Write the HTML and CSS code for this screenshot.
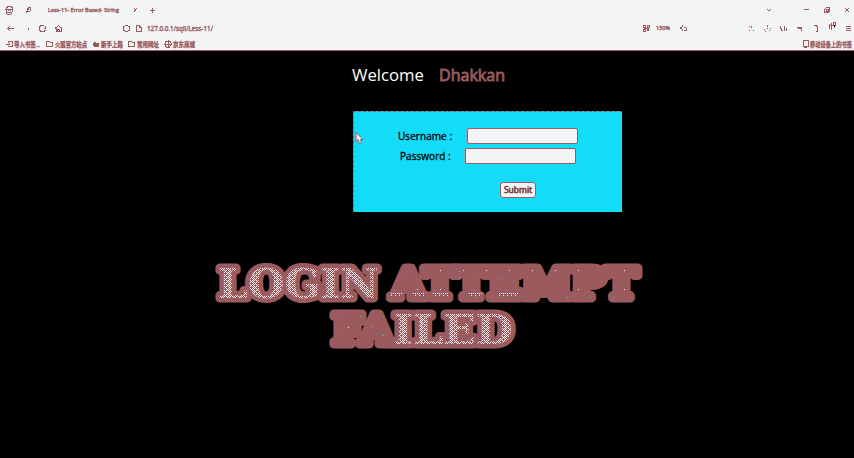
FILE: index.html
```
<!DOCTYPE html>
<html lang="zh-CN">
<head>
<meta charset="utf-8">
<title>Less-11- Error Based- String</title>
<link rel="stylesheet" href="styles.css">
</head>
<body>
<header class="chrome">
  <div class="row tabs">
    <svg class="icon" viewBox="0 0 10 10"><path d="M2 2h1V1h4v1h1v5L7 9H3L2 7zM1 4h8M4 4v2M6 4v2M3 7h4"/></svg>
    <svg class="icon g9" viewBox="0 0 10 10"><path d="M7 2L4 4v3l3-1V2M6 4L3 8M3 6h4"/></svg>
    <svg class="tab-title" width="72" height="14"><text x="0" y="9" textLength="71" lengthAdjust="spacingAndGlyphs">Less-11- Error Based- String</text></svg>
    <svg class="icon g10" viewBox="0 0 10 10"><path d="M4 3l2 2M7 3L4 7"/></svg>
    <svg class="icon g7" viewBox="0 0 10 10"><path d="M5 2.500v5M2.500 5.500h5"/></svg>
    <svg class="icon push" viewBox="0 0 10 10"><path d="M3 4l2 2 2-2"/></svg>
    <svg class="icon g27" viewBox="0 0 10 10"><path d="M2.500 4.500h5"/></svg>
    <svg class="icon g11" viewBox="0 0 10 10"><path d="M4 3l2-1 1.500 1v3L6 7.500H3L2.500 5zM4 4.500h2v2H4z"/></svg>
    <svg class="icon g10" viewBox="0 0 10 10"><path d="M3 3l4 4M7 3L3 7"/></svg>
  </div>
  <div class="row nav">
    <svg class="icon" viewBox="0 0 10 10"><path d="M3 5.500h7M6 3L3.500 5.500 6 8"/></svg>
    <svg class="icon g9" viewBox="0 0 10 10"><path d="M5.500 5v2"/></svg>
    <svg class="icon g4" viewBox="0 0 10 10"><path d="M7.500 3.500L6 2.500H4L2.500 4v3L4 8.500h3L8.500 7M8.500 3v2H6.500"/></svg>
    <svg class="icon g6" viewBox="0 0 10 10"><path d="M2 5.500L5.500 2.500 9 5.500M3 5v3.500h5V5M4.500 8V6h2v2"/></svg>
    <svg class="icon g58" viewBox="0 0 10 10"><path d="M2.500 4l2-1.500h2L8.500 4v3L6.500 8.500h-2L2.500 7z"/></svg>
    <svg class="icon g3" viewBox="0 0 10 10"><path d="M2.500 2.500H5L7.500 4.500v4h-5zM5.500 2.500v2H8"/></svg>
    <svg class="url" width="67" height="14"><text x="0" y="10" textLength="66" lengthAdjust="spacingAndGlyphs">127.0.0.1/sqli/Less-11/</text></svg>
    <svg class="icon push" viewBox="0 0 10 10"><path d="M3.500 2.500h2v2h-2zM7.500 2.500h2v2h-2zM3.500 6.500h2v2h-2zM7 6l2 2M9 6L7 8M4 5.500h5"/></svg>
    <svg class="zoom" width="15" height="14"><text x="0" y="9" textLength="14" lengthAdjust="spacingAndGlyphs">150%</text></svg>
    <svg class="icon g7" viewBox="0 0 10 10"><path d="M5 2L4 4 2 5l2 1v2M6 4l2 1v2H6v1"/></svg>
    <svg class="icon g58" viewBox="0 0 10 10"><path d="M5.500 3v2M3 3v1M3 7v1M7 7v1"/></svg>
    <svg class="icon g6" viewBox="0 0 10 10"><path d="M5.500 2v1.500M2.500 6v1M5 5v1M8 5v1M7 7v1M3 8h1"/></svg>
    <svg class="icon g6" viewBox="0 0 10 10"><path d="M2.500 3v2l1 1v2M6.500 3v5M4 7.500h1M8.500 5v3"/></svg>
    <svg class="icon g6" viewBox="0 0 10 10"><path d="M2.500 4.500h5v3M4 5.500h4"/></svg>
    <svg class="icon g7" viewBox="0 0 10 10"><path d="M3 2.500h2l1 1v5H4.500"/></svg>
    <svg class="icon g6 high" viewBox="0 0 10 10"><path d="M2.500 3v5M4.500 2v7M2 4h4V1h2.500v3H6M7 4v3"/><path class="ink" d="M7.500 3.500v2"/></svg>
    <svg class="icon g6" viewBox="0 0 10 10"><path d="M2.500 3.500h5M2.500 5.500h5M2.500 7.500h5"/></svg>
  </div>
  <div class="row marks">
    <svg class="icon" viewBox="0 0 10 10"><path d="M4 2.500h4v5H4M2 5h4M4.500 3.500L6 5 4.500 6.500"/></svg>
    <svg class="mark" width="27" height="14"><text x="0" y="9.500" textLength="26" lengthAdjust="spacingAndGlyphs">导入书签...</text></svg>
    <svg class="icon g4" viewBox="0 0 10 10"><path d="M1.500 2.500h3l1 1h2v4h-6z"/></svg>
    <svg class="mark" width="33" height="14"><text x="0" y="9.500" textLength="32" lengthAdjust="spacingAndGlyphs">火狐官方站点</text></svg>
    <svg class="icon g3" viewBox="0 0 10 10"><path class="solid" d="M3 4l1-1 1 1h2v3H3L2 6z"/></svg>
    <svg class="mark" width="23" height="14"><text x="0" y="9.500" textLength="22" lengthAdjust="spacingAndGlyphs">新手上路</text></svg>
    <svg class="icon g3" viewBox="0 0 10 10"><path d="M1.500 2.500h3l1 1h2v4h-6z"/></svg>
    <svg class="mark" width="23" height="14"><text x="0" y="9.500" textLength="22" lengthAdjust="spacingAndGlyphs">常用网址</text></svg>
    <svg class="icon g3" viewBox="0 0 10 10"><path d="M3.500 2h3L8 4v2L6.500 8h-3L2 6V4zM5 1v8M1 5h8"/></svg>
    <svg class="mark" width="23" height="14"><text x="0" y="9.500" textLength="22" lengthAdjust="spacingAndGlyphs">京东商城</text></svg>
    <svg class="icon push" viewBox="0 0 10 10"><path d="M3 1.500h5v6H3zM4 8.500h3"/></svg>
    <svg class="mark" width="43" height="14"><text x="0" y="9.500" textLength="42" lengthAdjust="spacingAndGlyphs">移动设备上的书签</text></svg>
  </div>
</header>
<main>
  <h1 class="welcome">
    <svg width="160" height="26"><text class="hello" x="0" y="20" textLength="72" lengthAdjust="spacingAndGlyphs">Welcome</text><text class="name" x="87" y="20" textLength="66" lengthAdjust="spacingAndGlyphs">Dhakkan</text></svg>
  </h1>
  <form class="login">
    <div class="field"><label for="user">Username :</label><input id="user" type="text"></div>
    <div class="field second"><label for="pass">Password :</label><input id="pass" type="password"></div>
    <button type="button">Submit</button>
    <svg class="cursor" width="9" height="13" viewBox="0 0 9 13"><path d="M1 .5v9l2-2 1.500 4 2-1L5.500 7.500h2.500z"/></svg>
  </form>
  <svg class="result" width="854" height="100" viewBox="0 255 854 100">
    <defs>
      <pattern id="dots" width="6" height="4" patternUnits="userSpaceOnUse"><rect class="rose" width="6" height="4"/><path class="white" d="M0 0h1v1h-1zM2 0h1v1h-1zM4 0h1v1h-1zM1 1h1v1h-1zM5 1h1v1h-1zM0 2h1v1h-1zM2 2h1v1h-1zM4 2h1v1h-1zM3 3h1v1h-1zM1 3h1v1h-1z"/></pattern>
      <pattern id="sparse" width="23" height="19" patternUnits="userSpaceOnUse"><rect class="rose" width="23" height="19"/><rect class="white" x="3" y="4" width="1" height="1"/><rect class="cyan" x="15" y="12" width="1" height="1"/></pattern>
      <pattern id="feet" width="4" height="4" patternUnits="userSpaceOnUse"><path class="white" d="M1 1h1v1h-1zM3 3h1v1h-1zM3 1h1v1h-1z"/></pattern>
    </defs>
    <text class="word" x="218" y="298" textLength="161" lengthAdjust="spacingAndGlyphs">LOGIN</text>
    <text class="word faded" x="391" y="298" textLength="247" lengthAdjust="spacingAndGlyphs">ATTEMPT</text>
    <text class="word" x="332" y="344" textLength="181" lengthAdjust="spacingAndGlyphs"><tspan class="faded">FA</tspan>ILED</text>
    <path class="feet" d="M390 292h13v5h-13zM412 292h13v5h-13zM432 292h16v5h-16zM468 292h15v5h-15zM498 293h20v4h-20z"/>
    <path class="cyan" d="M224 288h1v1h-1zM299 271h1v1h-1zM328 294h1v1h-1zM368 288h1v1h-1zM459 271h1v1h-1zM459 277h1v1h-1zM421 322h1v1h-1zM453 343h1v1h-1zM501 319h1v1h-1z"/>
  </svg>
</main>
</body>
</html>
```
FILE: styles.css
```
* { box-sizing: border-box; }
body {
  margin: 0;
  height: 458px;
  overflow: hidden;
  background: #000;
  font-family: "Open Sans", "Noto Sans CJK SC", sans-serif;
}
svg { display: block; flex: none; overflow: visible; }
.chrome {
  height: 51px;
  background: #f2f4f6;
  border-bottom: 1px solid #9b5a5d;
}
.row { display: flex; align-items: center; padding-left: 4px; }
.tabs { height: 20px; padding-right: 2px; }
.nav { height: 16px; padding-right: 1px; }
.marks { height: 16px; padding-right: 1px; }
.icon {
  width: 10px;
  height: 10px;
  fill: none;
  stroke: #9b5a5d;
  stroke-width: 1;
  shape-rendering: crispEdges;
}
.solid { fill: #9b5a5d; }
.ink { stroke: #000; }
.high { margin-bottom: 5px; }
.g3 { margin-left: 3px; }
.g4 { margin-left: 4px; }
.g6 { margin-left: 6px; }
.g7 { margin-left: 7px; }
.g9 { margin-left: 9px; }
.g10 { margin-left: 10px; }
.g11 { margin-left: 11px; }
.g27 { margin-left: 27px; }
.g58 { margin-left: 58px; }
.push { margin-left: auto; }
.row text { fill: #9b5a5d; stroke: #9b5a5d; stroke-width: .4px; }
.tab-title { margin-left: 15px; font-size: 6px; }
.url { margin-left: 3px; font-size: 7.5px; }
.zoom { margin-left: 6px; font-size: 6px; }
.mark { font-size: 6.5px; }
.welcome { margin: 10px 0 0 352px; height: 26px; font-size: 17px; font-weight: 400; }
.hello { fill: #fff; }
.name { fill: #9b5a5d; stroke: #9b5a5d; stroke-width: .9px; }
.login {
  position: relative;
  width: 269px;
  height: 101px;
  margin: 24px 0 0 353px;
  padding-top: 16px;
  border: 1px dashed #9b5a5d;
  border-right: 0;
  border-bottom: 0;
  background: #12dcf8;
}
.field { display: flex; align-items: center; height: 16px; padding-left: 44px; }
.second { margin-top: 4px; padding-left: 46px; }
label { width: 69px; font-size: 10.1px; line-height: 16px; white-space: nowrap; -webkit-text-stroke: .3px #000; }
.second label { width: 65px; }
input {
  width: 111px;
  height: 16px;
  padding: 0;
  border: 1px solid #9b5a5d;
  border-radius: 2px;
  background: #f2f4f6;
}
button {
  display: block;
  width: 36px;
  height: 16px;
  margin: 18px 0 0 146px;
  padding: 0;
  border: 1px solid #9b5a5d;
  border-radius: 3px;
  background: #f2f4f6;
  color: #4b292b;
  font: 8.5px/14px "Open Sans", sans-serif;
  -webkit-text-stroke: .6px #7b4245;
}
.cursor { position: absolute; left: 1px; top: 20px; fill: #f2f4f6; stroke: #9b5a5d; }
.result { margin-top: 43px; font: bold 41px "DejaVu Serif", serif; }
.word { fill: url(#dots); stroke: #9b5a5d; stroke-width: 9px; stroke-linejoin: round; paint-order: stroke; }
.faded { fill: url(#sparse); }
.feet { fill: url(#feet); }
.rose { fill: #9b5a5d; }
.white { fill: #f2f4f6; }
.cyan { fill: #12dcf8; }
```
